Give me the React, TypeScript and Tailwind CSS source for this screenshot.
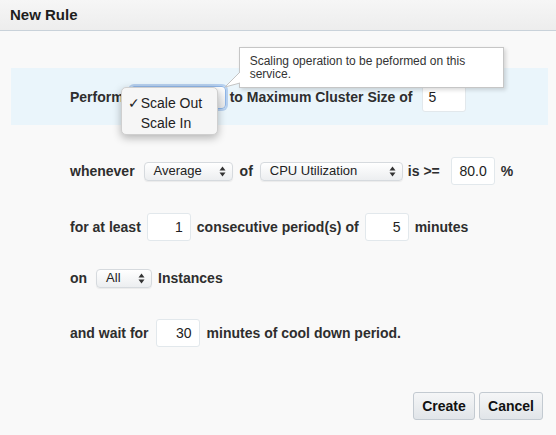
import React from "react";

function Arrows() {
  return (
    <svg width="7" height="11" viewBox="0 0 7 11" className="shrink-0">
      <path d="M3.5 0.5 L6.5 4.5 L0.5 4.5 Z" fill="#333" />
      <path d="M3.5 10.5 L6.5 6.5 L0.5 6.5 Z" fill="#333" />
    </svg>
  );
}

function Select({ label, className }: { label: string; className: string }) {
  return (
    <div
      className={`h-[19px] rounded-[4px] border border-[#d6dade] bg-gradient-to-b from-white to-[#eceef0] shadow-[0_1px_1px_rgba(0,0,0,0.06)] flex items-center justify-between pl-[9px] pr-[6px] text-[13px] font-normal text-[#222] ${className}`}
    >
      <span>{label}</span>
      <Arrows />
    </div>
  );
}

function NumInput({ value, left }: { value: string; left?: boolean }) {
  return (
    <div
      className={`w-[44px] h-[28px] shrink-0 bg-white border border-[#e2e8ec] rounded-[3px] flex items-center text-[14px] font-normal text-[#222] ${
        left ? "justify-start pl-[6px]" : "justify-end pr-[7px]"
      }`}
    >
      {value}
    </div>
  );
}

export default function App() {
  return (
    <div className="w-[556px] h-[435px] overflow-hidden bg-[#f9f9f9] font-['Liberation_Sans',Arial,sans-serif] text-[14px] font-bold text-[#2e2e2e] flex flex-col">
      {/* Header */}
      <div className="h-[31px] shrink-0 bg-gradient-to-b from-[#f6f6f6] to-[#ededed] border-b border-[#c9d2da] flex items-center pl-[10px]">
        <span className="text-[15px] font-bold text-[#1e1e1e]">New Rule</span>
      </div>

      {/* Perform row */}
      <div className="mt-[37px] ml-[11px] mr-[8px] h-[57px] shrink-0 bg-[#eaf5fb] flex items-center pl-[59px] pt-[2px]">
        <span>Perform</span>
        <div className="relative ml-[6px] w-[96px] h-[23px] shrink-0 rounded-[4px] border border-[#8fb5e6] bg-gradient-to-b from-white to-[#e6e8ea] shadow-[0_0_0_2px_rgba(120,165,225,0.45)]">
          {/* dropdown */}
          <div className="absolute left-[-10px] top-[0px] w-[97px] h-[48px] rounded-[5px] border border-[#cfcfcf] bg-[#f6f6f6] shadow-[0_3px_8px_rgba(0,0,0,0.28)] font-normal text-[14px] text-[#222] pt-[5px] z-10">
            <div className="h-[20px] flex items-center">
              <span className="w-[19px] pl-[6px] text-[14px]">✓</span>
              <span>Scale Out</span>
            </div>
            <div className="h-[20px] flex items-center pl-[19px]">Scale In</div>
          </div>
          {/* tooltip arrow */}
          <svg
            width="17"
            height="18"
            viewBox="0 0 17 18"
            className="absolute left-[93px] top-[-17px] z-20"
          >
            <path d="M16 2 L16 13 L1 17 Z" fill="white" />
            <path d="M16 2 L1 17 L16 13" fill="none" stroke="#c4c4c4" strokeWidth="1" />
          </svg>
          {/* tooltip */}
          <div className="absolute left-[108px] top-[-40px] w-[265px] h-[41px] bg-white border border-[#c6c6c6] shadow-[2px_2px_4px_rgba(0,0,0,0.15)] px-[10px] pt-[7px] text-[12px] leading-[13px] font-normal text-[#333] z-10">
            Scaling operation to be peformed on this
            <br />
            service.
          </div>
        </div>
        <span className="ml-[4px]">to Maximum Cluster Size of</span>
        <div className="ml-[9px]">
          <NumInput value="5" left />
        </div>
      </div>

      {/* whenever row */}
      <div className="mt-[32px] h-[28px] shrink-0 flex items-center pl-[70px]">
        <span>whenever</span>
        <Select label="Average" className="w-[89px] ml-[9px]" />
        <span className="ml-[7px]">of</span>
        <Select label="CPU Utilization" className="w-[143px] ml-[7px]" />
        <span className="ml-[5px]">is &gt;=</span>
        <div className="ml-[11px]">
          <NumInput value="80.0" />
        </div>
        <span className="ml-[6px]">%</span>
      </div>

      {/* for at least row */}
      <div className="mt-[28px] h-[28px] shrink-0 flex items-center pl-[70px] gap-[6px]">
        <span>for at least</span>
        <NumInput value="1" />
        <span>consecutive period(s) of</span>
        <NumInput value="5" />
        <span>minutes</span>
      </div>

      {/* on row */}
      <div className="mt-[23px] h-[28px] shrink-0 flex items-center pl-[70px]">
        <span>on</span>
        <Select label="All" className="w-[56px] ml-[9px]" />
        <span className="ml-[6px]">Instances</span>
      </div>

      {/* wait row */}
      <div className="mt-[27px] h-[28px] shrink-0 flex items-center pl-[70px] gap-[7px]">
        <span>and wait for</span>
        <NumInput value="30" />
        <span>minutes of cool down period.</span>
      </div>

      {/* buttons */}
      <div className="mt-[45px] flex justify-end pr-[13px] gap-[4px]">
        <button className="w-[62px] h-[28px] rounded-[3px] border border-[#c3cad1] bg-gradient-to-b from-[#f5f6f7] to-[#e1e5e9] text-[14px] font-bold text-[#111]">
          Create
        </button>
        <button className="w-[64px] h-[28px] rounded-[3px] border border-[#c3cad1] bg-gradient-to-b from-[#f5f6f7] to-[#e1e5e9] text-[14px] font-bold text-[#111]">
          Cancel
        </button>
      </div>
    </div>
  );
}
